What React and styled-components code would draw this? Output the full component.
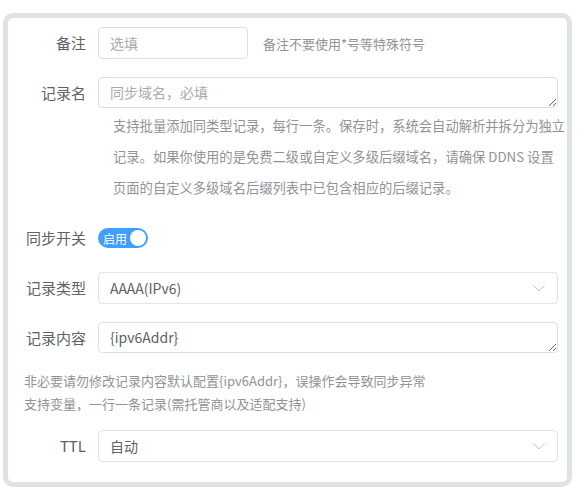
import { createGlobalStyle, styled } from "styled-components";

const GlobalStyle = createGlobalStyle`
  body {
    margin: 0;
    background: #fff;
    font-family: "Noto Sans CJK SC", "Noto Sans", sans-serif;
  }
`;

const Card = styled.div`
  box-sizing: border-box;
  width: 569px;
  margin: 13px 0 0 3px;
  border: 5px solid #dfe2e6;
  border-radius: 10px;
  padding: 9px 9px 20px 0;
  background: #fff;
`;

const FormItem = styled.div`
  display: flex;
  align-items: flex-start;
  margin-bottom: ${(p) => p.$mb ?? 18}px;
`;

const Label = styled.label`
  box-sizing: border-box;
  flex: 0 0 90px;
  padding-right: 12px;
  text-align: right;
  line-height: 32px;
  font-size: 15px;
  color: #606266;
`;

const Content = styled.div`
  flex: 1;
  min-width: 0;
  display: ${(p) => (p.$inline ? "flex" : "block")};
  align-items: center;
  min-height: 32px;
`;

const TextInput = styled.input`
  box-sizing: border-box;
  width: ${(p) => p.$width || "100%"};
  height: 32px;
  padding: 0 11px;
  border: 1px solid #dcdfe6;
  border-radius: 4px;
  font: inherit;
  font-size: 14px;
  color: #606266;
  outline: none;
  &::placeholder {
    color: #a8abb2;
  }
`;

const TextArea = styled.textarea`
  display: block;
  box-sizing: border-box;
  width: 100%;
  height: 31px;
  padding: 4px 11px;
  border: 1px solid #dcdfe6;
  border-radius: 4px;
  font: inherit;
  font-size: 14px;
  line-height: 21px;
  color: #606266;
  resize: vertical;
  outline: none;
  &::placeholder {
    color: #a8abb2;
  }
`;

const SideTip = styled.span`
  margin-left: 15px;
  font-size: 13px;
  color: #909399;
`;

const Hint = styled.div`
  margin: 2px -8px 0 0;
  padding-left: 15px;
  font-size: 13.3px;
  line-height: 31px;
  color: #909399;
`;

const Switch = styled.button`
  position: relative;
  display: flex;
  align-items: center;
  width: 50px;
  height: 20px;
  padding: 0 0 0 5px;
  border: none;
  border-radius: 10px;
  background: #409eff;
  color: #fff;
  font: inherit;
  font-size: 12px;
  cursor: pointer;

  &::after {
    content: "";
    position: absolute;
    right: 2px;
    top: 2px;
    width: 16px;
    height: 16px;
    border-radius: 50%;
    background: #fff;
  }
`;

const Select = styled.div`
  box-sizing: border-box;
  display: flex;
  align-items: center;
  justify-content: space-between;
  height: 32px;
  padding: 0 12px 0 11px;
  border: 1px solid #e1e4ea;
  border-radius: 4px;
  font-size: 14px;
  color: #606266;
`;

const Note = styled.div`
  margin: 15px 0 15px;
  padding-left: 16px;
  font-size: 13px;
  line-height: 23px;
  color: #909399;
`;

const Chevron = () => (
  <svg width="12" height="7" viewBox="0 0 12 7" fill="none">
    <path d="M0.5 0.5 6 6 11.5 0.5" stroke="#c0c4cc" strokeWidth="1" />
  </svg>
);

export default function App() {
  return (
    <>
      <GlobalStyle />
      <Card>
        <FormItem>
          <Label>备注</Label>
          <Content $inline>
            <TextInput $width="150px" placeholder="选填" />
            <SideTip>备注不要使用*号等特殊符号</SideTip>
          </Content>
        </FormItem>

        <FormItem $mb={19}>
          <Label>记录名</Label>
          <Content>
            <TextArea placeholder="同步域名，必填" />
            <Hint>
              支持批量添加同类型记录，每行一条。保存时，系统会自动解析并拆分为独立记录。如果你使用的是免费二级或自定义多级后缀域名，请确保 DDNS 设置页面的自定义多级域名后缀列表中已包含相应的后缀记录。
            </Hint>
          </Content>
        </FormItem>

        <FormItem>
          <Label>同步开关</Label>
          <Content $inline>
            <Switch type="button">启用</Switch>
          </Content>
        </FormItem>

        <FormItem>
          <Label>记录类型</Label>
          <Content>
            <Select>
              <span>AAAA(IPv6)</span>
              <Chevron />
            </Select>
          </Content>
        </FormItem>

        <FormItem $mb={0}>
          <Label>记录内容</Label>
          <Content>
            <TextArea defaultValue="{ipv6Addr}" />
          </Content>
        </FormItem>

        <Note>
          非必要请勿修改记录内容默认配置{"{ipv6Addr}"}，误操作会导致同步异常
          <br />
          支持变量，一行一条记录(需托管商以及适配支持)
        </Note>

        <FormItem $mb={0}>
          <Label>TTL</Label>
          <Content>
            <Select>
              <span>自动</span>
              <Chevron />
            </Select>
          </Content>
        </FormItem>
      </Card>
    </>
  );
}
